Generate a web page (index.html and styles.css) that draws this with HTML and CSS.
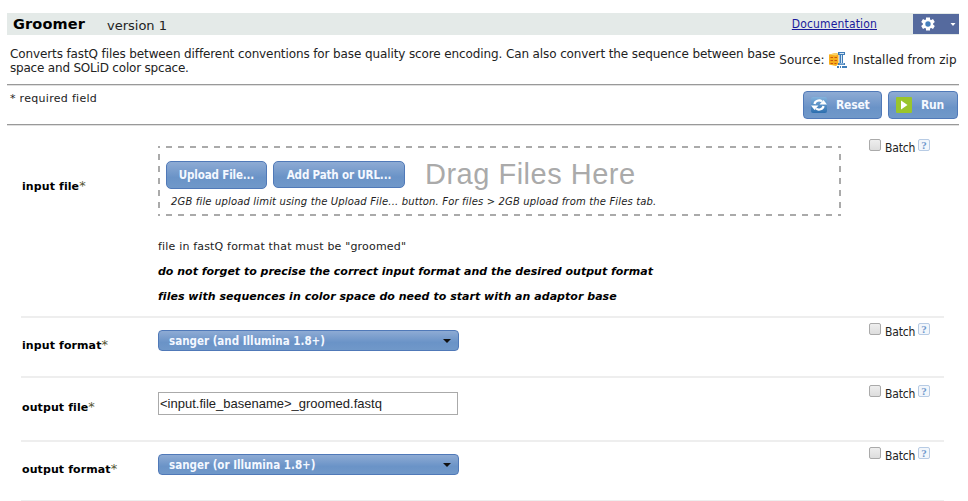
FILE: index.html
```html
<!DOCTYPE html>
<html lang="en">
<head>
<meta charset="utf-8">
<title>Groomer</title>
<link rel="stylesheet" href="styles.css">
</head>
<body>
<header class="titlebar">
  <h1 class="name">Groomer</h1><span class="version">version 1</span>
  <a class="doc" href="#">Documentation</a>
  <button class="gear" aria-label="Settings">
    <svg width="46" height="20" viewBox="0 0 46 20"><path fill="#fff" d="M13 3.500h4v2l1.200.6 1.800-1 1.800 3-1.700 1.300v1.200l1.700 1.300-1.800 3-1.800-1-1.200.6v2h-4v-2l-1.200-.6-1.800 1-1.800-3 1.700-1.300V9.400L8.200 8.100l1.800-3 1.800 1 1.200-.6z"/><circle cx="15" cy="10" r="2.700" fill="#4580bd"/><path fill="#fff" d="M37.500 9h5L40 12z"/></svg>
  </button>
</header>
<section class="about">
  <p class="desc"><span class="l1">Converts fastQ files between different conventions for base quality score encoding. Can also convert the sequence between base</span><br><span class="l2">space and SOLiD color spcace.</span></p>
  <div class="source"><span class="src">Source:</span>
    <svg class="zip" width="18" height="16" viewBox="0 0 18 16"><path fill="#f7ae1d" d="M0 2.500L7 1l2.500 1v10L7 14l-7-1.500z"/><path fill="#fbd46a" d="M0 2.500L7 1l2.500 1L7 3.500z"/><path stroke="#c9560c" d="M1.500 5.500H4M5.500 5.500H8M1.500 8.500H4M5.500 8.500H8M1.500 11.500H4M5.500 11.500H7.500" fill="none"/><path fill="#3f7db8" d="M9 0h7v3h-2v8h2v2H9v-2h1.500V3H9z"/><path fill="#d4e6f5" d="M10.500 1H15v1h-4.500zM12 3h1v8h-1zM10.500 11.500H15v.8h-4.500z"/><path fill="#3f7db8" d="M8 14h2v2H8zM11 14h1v2h-1zM13 14h5v2h-5z"/></svg>
    <span class="inst">Installed from zip</span></div>
</section>
<section class="toolbar">
  <span class="required">* required field</span>
  <button class="btn reset"><svg width="16" height="16" viewBox="0 0 16 16"><defs><linearGradient id="g" x2="0" y2="1"><stop stop-color="#83b2dc"/><stop offset="1" stop-color="#2c6eae"/></linearGradient></defs><rect width="16" height="16" rx="2" fill="url(#g)"/><path fill="none" stroke="#fff" stroke-width="2.200" d="M3.500 7a4.500 4 0 0 1 7.500-2.500M12.500 9a4.500 4 0 0 1-7.500 2.500"/><path fill="#fff" d="M8.500 7.500H16L12.500 3zM7.500 8.500H0L3.500 13z"/></svg><span>Reset</span></button>
  <button class="btn run"><svg width="16" height="16" viewBox="0 0 16 16"><rect width="16" height="16" rx="1" fill="#9ac52b"/><path fill="#fff" d="M5 3.500l6.500 4.500L5 12.500z"/></svg><span>Run</span></button>
</section>
<main class="params">
  <section class="row first">
    <label class="label">input file<i>*</i></label>
    <div class="control">
      <div class="drop">
        <svg class="dashes" width="683" height="70"><path d="M0 1H683"/><path d="M0 69H683"/><path d="M1 0V70"/><path d="M682 0V70"/></svg>
        <div class="dropline"><button class="btn up">Upload File...</button><button class="btn url">Add Path or URL...</button><span class="drag">Drag Files Here</span></div>
        <em class="limit">2GB file upload limit using the Upload File... button. For files &gt; 2GB upload from the Files tab.</em>
      </div>
      <p class="help intro">file in fastQ format that must be "groomed"</p>
      <p class="help strong">do not forget to precise the correct input format and the desired output format</p>
      <p class="help strong last">files with sequences in color space do need to start with an adaptor base</p>
    </div>
    <div class="batch"><span class="check"></span><span class="bt">Batch</span><span class="q">?</span></div>
  </section>
  <section class="row r2">
    <label class="label">input format<i>*</i></label>
    <div class="control"><button class="select"><span>sanger (and Illumina 1.8+)</span><span class="arrow"></span></button></div>
    <div class="batch"><span class="check"></span><span class="bt">Batch</span><span class="q">?</span></div>
  </section>
  <section class="row r3">
    <label class="label">output file<i>*</i></label>
    <div class="control"><input class="field" value="&lt;input.file_basename&gt;_groomed.fastq"></div>
    <div class="batch"><span class="check"></span><span class="bt">Batch</span><span class="q">?</span></div>
  </section>
  <section class="row r4">
    <label class="label">output format<i>*</i></label>
    <div class="control"><button class="select"><span>sanger (or Illumina 1.8+)</span><span class="arrow"></span></button></div>
    <div class="batch"><span class="check"></span><span class="bt">Batch</span><span class="q">?</span></div>
  </section>
</main>
</body>
</html>
```
FILE: styles.css
```css
* { box-sizing: border-box; }
body { margin: 0; padding: 13px 9px 0 7px; height: 501px; overflow: hidden; background: #fff; color: #222; font: 12px/14px "DejaVu Sans", Verdana, sans-serif; white-space: nowrap; }
button { font: inherit; margin: 0; padding: 0; border: 0; }
p, h1 { margin: 0; }
.titlebar { display: flex; height: 22px; background: #e4eae8; padding-left: 6px; }
.name { width: 94px; font: bold 14.500px/23px "DejaVu Sans", sans-serif; letter-spacing: .15px; color: #000; }
.version { font-size: 13px; line-height: 25px; }
.doc { margin-left: auto; margin-right: 36px; line-height: 22px; font-family: "DejaVu Sans Condensed", "DejaVu Sans"; font-stretch: condensed; letter-spacing: .15px; color: #1a1a9c; text-decoration: underline; }
.gear { width: 46px; height: 20px; margin: 1px 0 0; background: #556a9e; }
.gear svg { display: block; }
.about { display: flex; height: 49px; padding: 12px 3px 0; }
.l1 { letter-spacing: -.113px; }
.l2 { letter-spacing: -.2px; }
.source { display: flex; margin-left: 4px; padding-top: 6px; }
.zip { margin: -1px 6px 0 4px; }
.toolbar { display: flex; height: 41px; padding: 6px 1px 0 3px; border-top: 1px solid #999; border-bottom: 1px solid #999; box-shadow: inset 0 1px #e0e0e0, 0 1px #e0e0e0; }
.required { font-size: 11px; letter-spacing: .3px; margin-right: auto; padding-top: 1px; }
.btn, .select { display: flex; align-items: center; border: 1px solid #5079b8; border-radius: 4px; background: linear-gradient(#8eabd4, #6a93c7 60%, #7098c9); color: #f4f8ff; font: bold 11.500px/14px "DejaVu Sans Condensed", "DejaVu Sans"; font-stretch: condensed; letter-spacing: -.15px; }
.btn { height: 28px; }
.reset, .run { padding-left: 7px; gap: 9px; font-size: 12px; letter-spacing: -.2px; }
.reset { width: 79px; margin-right: 6px; }
.run { width: 70px; }
.params { padding: 1px 15px 0 14px; }
.row { display: flex; border-bottom: 2px solid #eee; }
.first { height: 192px; }
.r2 { height: 60px; }
.r3 { height: 64px; }
.r4 { height: 60px; }
.label { width: 137px; padding-left: 1px; font-weight: bold; font-size: 11px; letter-spacing: .1px; color: #000; padding-top: 21px; }
.first .label { padding-top: 54px; }
.r3 .label { padding-top: 23px; }
.label i { font-style: normal; font-weight: normal; font-size: 13px; line-height: 12px; color: #553; }
.control { width: 711px; }
.first .control { padding-top: 20px; }
.drop { position: relative; width: 683px; height: 70px; padding: 15px 0 0 8px; }
.dashes { position: absolute; left: 0; top: 0; fill: none; stroke: #aaa; stroke-width: 2; stroke-dasharray: 6 6; stroke-dashoffset: 4; }
.dropline { display: flex; height: 28px; }
.up { width: 101px; justify-content: center; margin-right: 6px; border-radius: 5px; }
.url { width: 132px; height: 27px; justify-content: center; border-radius: 5px; }
.drag { margin-left: 20px; font: 29px/27px "Liberation Sans", sans-serif; letter-spacing: .5px; color: #aaa; }
.limit { display: block; margin: 6px 0 0 5px; font-size: 10px; letter-spacing: .16px; }
.help { margin-top: 11px; font-size: 11px; }
.intro { margin-top: 24px; letter-spacing: .18px; }
.strong { font-weight: bold; font-style: italic; color: #000; }
.last { letter-spacing: .035px; }
.select { width: 301px; height: 21px; margin-top: 12px; padding: 0 7px 0 10px; letter-spacing: 0; }
.arrow { margin-left: auto; border: 4px solid transparent; border-top-color: #111; border-bottom: 0; }
.field { display: block; width: 300px; height: 23px; margin-top: 14px; padding: 0 1px; border: 1px solid #aaa; font: 13px "Liberation Sans", sans-serif; color: #222; }
.batch { display: flex; padding-top: 5px; height: 24px; }
.first .batch { padding-top: 13px; height: 32px; }
.r3 .batch { padding-top: 7px; }
.check { width: 12px; height: 12px; border: 1px solid #aaa; border-radius: 2px; background: linear-gradient(#eee, #ddd); margin-right: 4px; }
.bt { width: 30px; margin: 2px 3px 0 0; font-family: "DejaVu Sans Condensed", "DejaVu Sans"; font-stretch: condensed; letter-spacing: -.15px; }
.q { width: 12px; height: 12px; border: 1px solid #b7cbe4; border-radius: 2px; color: #6d98cc; background: #f2f6fb; text-align: center; font: bold 11px/10px "Liberation Serif", serif; }
```
